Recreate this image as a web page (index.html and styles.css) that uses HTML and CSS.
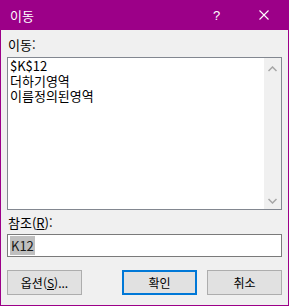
FILE: index.html
```html
<!DOCTYPE html>
<html lang="ko">
<head>
    <meta charset="UTF-8">
    <title>이동</title>
    <link rel="stylesheet" href="styles.css">
</head>
<body>
    <div class="dialog">
        <div class="titlebar">
            <span class="title">이동</span>
            <span class="help">?</span>
            <span class="close">
                <svg width="10" height="10" viewBox="0 0 10 10"><path d="M0.5 0.5 L9.5 9.5 M9.5 0.5 L0.5 9.5" stroke="#fff" stroke-width="1.1" fill="none"/></svg>
            </span>
        </div>
        <div class="content">
            <div class="label">이동:</div>
            <div class="listbox">
                <div class="items">
                    <div class="item">$K$12</div>
                    <div class="item">더하기영역</div>
                    <div class="item">이름정의된영역</div>
                </div>
                <div class="scrollbar">
                    <svg width="9" height="6" viewBox="0 0 9 6"><path d="M0.5 5 L4.5 1 L8.5 5" stroke="#a6a6a6" stroke-width="1.5" fill="none"/></svg>
                    <svg width="9" height="6" viewBox="0 0 9 6"><path d="M0.5 1 L4.5 5 L8.5 1" stroke="#a6a6a6" stroke-width="1.5" fill="none"/></svg>
                </div>
            </div>
            <div class="label ref">참조(<u>R</u>):</div>
            <div class="textbox"><span class="selected">K12</span></div>
            <div class="buttons">
                <button class="button">옵션(<u>S</u>)...</button>
                <div class="right">
                    <button class="button default">확인</button>
                    <button class="button">취소</button>
                </div>
            </div>
        </div>
    </div>
</body>
</html>
```

FILE: styles.css
```css
body {
    margin: 0;
    font-family: "Noto Sans CJK KR", "Noto Sans", sans-serif;
    font-size: 12px;
    color: #000;
}
.dialog {
    width: 289px;
    height: 306px;
    box-sizing: border-box;
    border: 1px solid #9c0088;
    border-top: none;
    background: #f0f0f0;
    display: flex;
    flex-direction: column;
}
.titlebar {
    height: 30px;
    background: #9c0088;
    color: #fff;
    display: flex;
    align-items: center;
    margin: 0 -1px;
    padding-left: 10px;
}
.title {
    flex: 1;
    font-size: 13px;
}
.help {
    width: 16px;
    margin-right: 30px;
    font-family: "Liberation Sans", sans-serif;
    font-size: 13px;
}
.close {
    width: 10px;
    margin-right: 20px;
    display: flex;
}
.content {
    padding: 7px 6px 0 6px;
}
.label {
    font-size: 13px;
    line-height: 16px;
    padding-left: 1px;
    margin-bottom: 4px;
}
.label.ref {
    margin-top: 5px;
    margin-bottom: 3px;
}
.listbox {
    height: 153px;
    box-sizing: border-box;
    border: 1px solid #828790;
    background: #fff;
    display: flex;
}
.items {
    flex: 1;
    padding: 0 2px;
    font-size: 13px;
}
.item {
    line-height: 15px;
}
.scrollbar {
    width: 17px;
    background: #f0f0f0;
    display: flex;
    flex-direction: column;
    justify-content: space-between;
    align-items: center;
    padding: 8px 0 5px;
}
.textbox {
    height: 23px;
    box-sizing: border-box;
    border: 1px solid #7a7a7a;
    background: #fff;
    padding: 3px 2px 0;
    font-size: 13px;
    line-height: 15px;
}
.selected {
    background: #bfbfbf;
    color: #1a1a1a;
    padding: 0 1px;
}
.buttons {
    margin-top: 13px;
    display: flex;
    justify-content: space-between;
}
.right {
    display: flex;
    gap: 10px;
}
.button {
    width: 75px;
    height: 25px;
    box-sizing: border-box;
    background: #e1e1e1;
    border: 1px solid #adadad;
    font-family: "Noto Sans CJK KR", "Noto Sans", sans-serif;
    font-size: 12px;
    color: #000;
    padding: 0;
}
.button.default {
    border: 2px solid #0078d7;
}
```
